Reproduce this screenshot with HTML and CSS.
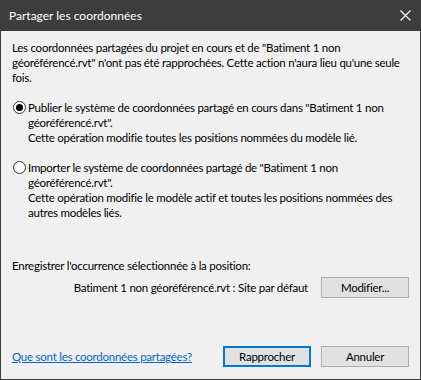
FILE: index.html
```html
<!DOCTYPE html>
<html lang="fr">
<head>
<meta charset="utf-8">
<link rel="stylesheet" href="styles.css">
</head>
<body>
<div class="window">
  <div class="titlebar">
    <span class="title">Partager les coordonnées</span>
    <svg class="close" width="11" height="11" viewBox="0 0 11 11"><path d="M0.5 0.5 L10.5 10.5 M10.5 0.5 L0.5 10.5" stroke="#ffffff" stroke-width="1.1" fill="none"/></svg>
  </div>
  <div class="content">
    <p class="intro">Les coordonnées partagées du projet en cours et de "Batiment 1 non<br>géoréférencé.rvt" n'ont pas été rapprochées. Cette action n'aura lieu qu'une seule<br>fois.</p>
    <div class="option first">
      <span class="radio checked"></span>
      <p class="opt-text">Publier le système de coordonnées partagé en cours dans "Batiment 1 non<br>géoréférencé.rvt".<br>Cette opération modifie toutes les positions nommées du modèle lié.</p>
    </div>
    <div class="option second">
      <span class="radio"></span>
      <p class="opt-text">Importer le système de coordonnées partagé de "Batiment 1 non<br>géoréférencé.rvt".<br>Cette opération modifie le modèle actif et toutes les positions nommées des<br>autres modèles liés.</p>
    </div>
    <p class="label">Enregistrer l'occurrence sélectionnée à la position:</p>
    <div class="position-row">
      <span class="position">Batiment 1 non géoréférencé.rvt : Site par défaut</span>
      <span class="btn">Modifier...</span>
    </div>
    <div class="footer">
      <a class="link" href="#">Que sont les coordonnées partagées?</a>
      <div class="buttons">
        <span class="btn default">Rapprocher</span>
        <span class="btn">Annuler</span>
      </div>
    </div>
  </div>
</div>
</body>
</html>
```
FILE: styles.css
```css
html, body {
  margin: 0;
  padding: 0;
  background: #f0f0f0;
}
body {
  font-family: "Segoe UI", Lato, "Liberation Sans", sans-serif;
  font-size: 11.5px;
  letter-spacing: -0.25px;
  color: #000;
  white-space: nowrap;
}
.window {
  width: 421px;
  height: 380px;
  box-sizing: border-box;
  border: 1px solid #3d3d3d;
  border-top: none;
  background: #f0f0f0;
  display: flex;
  flex-direction: column;
  overflow: hidden;
}
.titlebar {
  height: 31px;
  flex: none;
  background: #3d3d3d;
  color: #ffffff;
  display: flex;
  align-items: center;
  justify-content: space-between;
  padding: 0 10px 0 9px;
  margin: 0 -1px;
}
.title {
  font-size: 12px;
  letter-spacing: 0;
}
.close {
  display: block;
}
.content {
  flex: 1;
  display: flex;
  flex-direction: column;
  padding: 9px 11px 12px 11px;
}
p {
  margin: 0;
  line-height: 15px;
}
.option {
  display: flex;
  align-items: flex-start;
}
.option.first {
  margin-top: 15px;
}
.option.second {
  margin-top: 15px;
}
.radio {
  flex: none;
  width: 11px;
  height: 11px;
  border: 1px solid #333333;
  border-radius: 50%;
  background: #ffffff;
  margin: 1px 2px 0 1px;
  display: flex;
  align-items: center;
  justify-content: center;
}
.radio.checked::after {
  content: "";
  width: 7px;
  height: 7px;
  border-radius: 50%;
  background: #000000;
}
.label {
  margin-top: 38px;
}
.position-row {
  display: flex;
  justify-content: flex-end;
  align-items: center;
  gap: 13px;
  margin-top: 4px;
}
.btn {
  box-sizing: border-box;
  width: 88px;
  height: 21px;
  border: 1px solid #adadad;
  background: #e1e1e1;
  display: flex;
  align-items: center;
  justify-content: center;
}
.btn.default {
  border: 2px solid #0078d7;
}
.footer {
  margin-top: auto;
  display: flex;
  align-items: center;
  justify-content: space-between;
}
.buttons {
  display: flex;
  gap: 10px;
}
.link {
  color: #0066cc;
  text-decoration: underline;
}
```
